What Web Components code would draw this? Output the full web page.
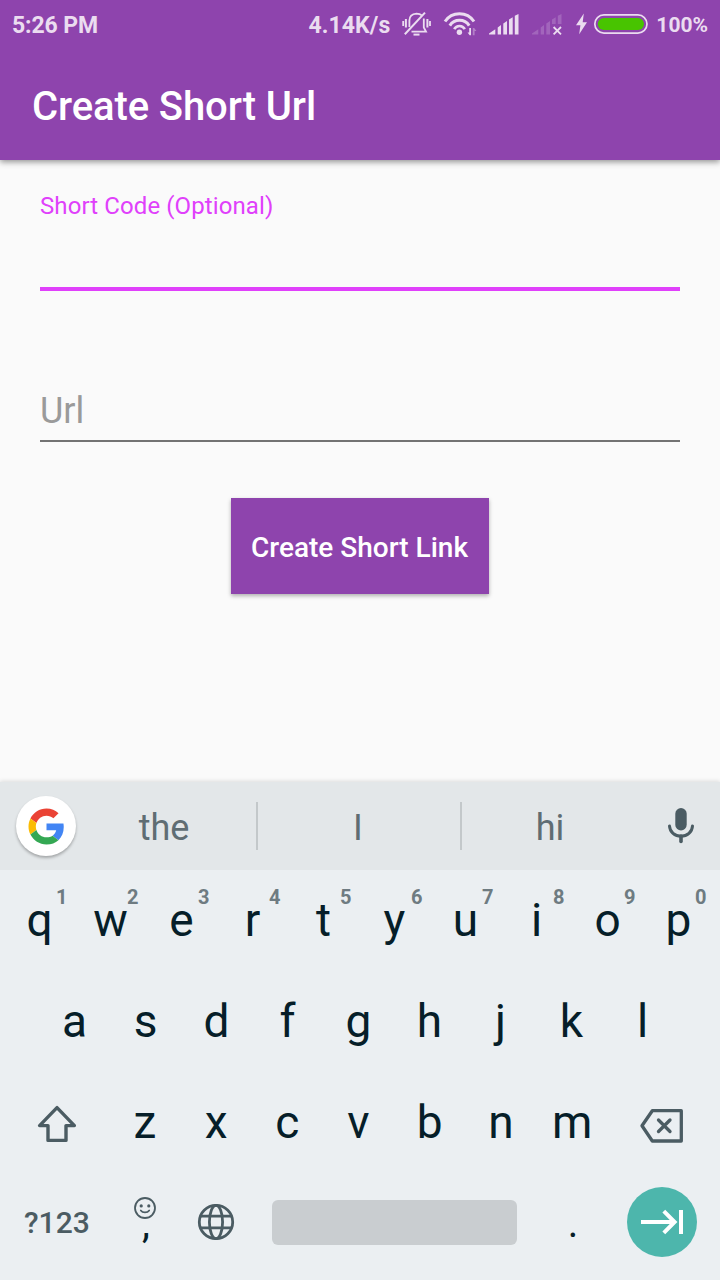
<!DOCTYPE html>
<html lang="en">
<head>
<meta charset="utf-8">
<title>Create Short Url</title>
<style>
  html, body { margin: 0; padding: 0; }
  body { font-family: Roboto, "Noto Sans", sans-serif; background: #fafafa; width: 720px; height: 1280px; overflow: hidden; }
</style>
</head>
<body>
<short-url-app></short-url-app>
<script>
const define = (name, html, setup) => {
  const tpl = document.createElement('template');
  tpl.innerHTML = html;
  customElements.define(name, class extends HTMLElement {
    constructor() {
      super();
      this.attachShadow({ mode: 'open' }).append(tpl.content.cloneNode(true));
    }
    connectedCallback() { if (setup) setup(this, this.shadowRoot); }
  });
};

/* Icons: [viewBox, markup]; the viewBox size is also the drawn size. */
const bars = `<path d="M0 20.5V19.5L6.3 15.2V20.5ZM8.7 20.5V13.4L12 11.1V20.5ZM14.3 20.5V9.5L18 7V20.5ZM20 20.5V5.6L23.7 3.2V20.5ZM25.8 20.5V1.8L29.5 0V20.5Z"/>`;
const ICONS = {
  silent: ['402 11 30 26', `<g fill="none" stroke="currentColor" stroke-width="1.8"><path d="M409.4 27V20.5C409.4 16.5 411.5 14 416.5 13.6C419 13.6 420.5 14.2 421.8 15.4M423.8 18.5V27.5L426 31.6H411.5"/><path d="M404.8 34.2L425 12.6" stroke-width="2"/><path d="M413.5 34.6H419.5" stroke-width="2"/><path d="M403.2 21V26M430 21V26"/><path d="M405.9 19V27.5M427.4 19V27.5" stroke-width="2"/></g>`],
  wifi: ['443 12 34 25', `<g fill="none" stroke="currentColor" stroke-width="3"><path d="M445 21.5A17.5 17.5 0 0 1 474 21.5"/><path d="M449.8 25.6A11.6 11.6 0 0 1 469.2 25.6"/><path d="M454.2 29.2A6 6 0 0 1 464.8 29.2" stroke-width="2.6"/></g><circle cx="459.4" cy="32.2" r="2.7"/><path d="M469.2 28h1.8v7.3h-1.4L467.6 32.4h1.6z"/><path opacity=".4" d="M472.8 28h1.4l2.2 3h-1.8v4.3h-1.8z"/>`],
  signal: ['0 0 30 21', bars],
  nosignal: ['0 0 30 21', `<g opacity=".22"><path d="M0 20.5V19.5L6.3 15.2V20.5ZM8.7 20.5V13.4L12 11.1V20.5ZM14.3 20.5V9.5L18 7V20.5ZM20 10V5.6L23.7 3.2V10ZM25.8 10V1.8L29.5 0V10Z"/></g><path d="M21.6 13L29 20.4M29 13L21.6 20.4" fill="none" stroke="currentColor" stroke-width="1.8"/>`],
  bolt: ['575 13 13 22', `<path d="M583.8 13.4L576 25.3H580.4L579.2 34.2L587 22.2H582.7Z"/>`],
  battery: ['594 14 54 20', `<rect x="594.8" y="14.9" width="52.2" height="18.2" rx="9.1" fill="none" stroke="currentColor" stroke-width="1.7"/><rect x="597.8" y="18" width="46.2" height="12" rx="6" fill="#48c400"/>`],
  google: ['2 2 44 44', `<path fill="#EA4335" d="M24 9.5c3.54 0 6.71 1.22 9.21 3.6l6.85-6.85C35.9 2.38 30.47 0 24 0 14.62 0 6.51 5.38 2.56 13.22l7.98 6.19C12.43 13.72 17.74 9.5 24 9.5z"/><path fill="#4285F4" d="M46.98 24.55c0-1.57-.15-3.09-.38-4.55H24v9.02h12.94c-.58 2.96-2.26 5.48-4.78 7.18l7.73 6c4.51-4.18 7.09-10.36 7.09-17.65z"/><path fill="#FBBC05" d="M10.53 28.59c-.48-1.45-.76-2.99-.76-4.59s.27-3.14.76-4.59l-7.98-6.19C.92 16.46 0 20.12 0 24c0 3.88.92 7.54 2.56 10.78l7.97-6.19z"/><path fill="#34A853" d="M24 48c6.48 0 11.93-2.13 15.89-5.81l-7.73-6c-2.15 1.45-4.92 2.3-8.16 2.3-6.26 0-11.57-4.22-13.47-9.91l-7.98 6.19C6.51 42.62 14.62 48 24 48z"/>`],
  mic: ['667 807 28 37', `<rect x="675.3" y="808" width="11.4" height="22.4" rx="5.7"/><path d="M669.5 826C669.8 832 674.8 836.2 681 836.2S692.2 832 692.5 826" fill="none" stroke="currentColor" stroke-width="3" stroke-linecap="round"/><path d="M681 836V841.5" stroke="currentColor" stroke-width="3.6" stroke-linecap="round"/>`],
  shift: ['37 1104 40 40', `<path d="M57 1107.6L39.6 1125.6H48V1140.4H66V1125.6H74.4Z" fill="none" stroke="currentColor" stroke-width="3.4" stroke-linejoin="round"/>`],
  backspace: ['640 1107 44 37', `<g fill="none" stroke="currentColor" stroke-width="3.3" stroke-linejoin="round" stroke-linecap="round"><path d="M642 1125.8L652.3 1110.7H681.3V1141H652.3Z"/><path d="M658.5 1120L670 1131.5M670 1120L658.5 1131.5"/></g>`],
  smile: ['0 0 22 22', `<g fill="none" stroke="currentColor"><circle cx="11" cy="11" r="10" stroke-width="1.8"/><path d="M6.8 13.4C8.6 16 13.4 16 15.2 13.4" stroke-width="1.7" stroke-linecap="round"/></g><circle cx="7.2" cy="8.9" r="1.6"/><circle cx="14.8" cy="8.9" r="1.6"/>`],
  globe: ['0 0 38 38', `<g fill="none" stroke="currentColor" stroke-width="2.8"><circle cx="19" cy="19" r="16.7"/><ellipse cx="19" cy="19" rx="6.6" ry="16.7"/><path d="M3 13.2H35M3 24.8H35"/></g>`],
  next: ['627 1187 70 70', `<g fill="none" stroke="currentColor" stroke-width="4"><path d="M641 1222H674"/><path d="M663.8 1211.2L674.6 1222L663.8 1232.8"/><path d="M681 1210V1234"/></g>`]
};
define('ui-icon', `<style>:host{display:inline-flex;flex:none}svg{display:block;fill:currentColor;overflow:visible}</style>`, (el, root) => {
  const [box, body] = ICONS[el.getAttribute('name')];
  const [, , w, h] = box.split(' ');
  const s = el.getAttribute('size');
  root.innerHTML += `<svg viewBox="${box}" width="${s || w}" height="${s || h}">${body}</svg>`;
});

define('status-bar', `<style>
  :host{display:flex;height:50px;align-items:center;color:#ebdcf0;font-size:23px;font-weight:700;line-height:48px;padding:0 12px 0 12px}
  .time{flex:1}
  ui-icon{margin-left:12px}
  span{white-space:nowrap;padding-top:2px;letter-spacing:-.1px}
  .level{margin-left:8px;padding:0;font-size:21px;letter-spacing:0}
</style>
<span class="time">5:26 PM</span><span style="letter-spacing:.1px">4.14K/s</span>
<ui-icon name="silent" style="margin-left:12px;margin-bottom:2px"></ui-icon>
<ui-icon name="wifi" style="margin-left:11px;margin-bottom:1px"></ui-icon>
<ui-icon name="signal" style="margin-bottom:1px"></ui-icon>
<ui-icon name="nosignal" style="margin-left:13px;margin-bottom:1px"></ui-icon>
<ui-icon name="bolt" style="margin-left:13px;margin-bottom:2px"></ui-icon>
<ui-icon name="battery" style="margin-left:6px;margin-bottom:2px"></ui-icon>
<span class="level">100%</span>`);

define('app-bar', `<style>
  :host{display:block;height:160px;background:#8e44ad;color:#fff;box-shadow:0 2px 6px rgba(0,0,0,.42);position:relative}
  h1{margin:0;padding-left:32px;font-size:40px;font-weight:500;line-height:114px;letter-spacing:-.1px}
</style><status-bar></status-bar><h1><slot></slot></h1>`);

define('text-field', `<style>
  :host{display:flex;flex-direction:column;justify-content:flex-end;box-sizing:border-box;height:112px;border-bottom:2px solid #737373;color:#9a9a9a;font-size:36px}
  .label{line-height:58px}
  :host([focused]){border-bottom:4px solid #e040fb;color:#e040fb;font-size:24px;letter-spacing:.1px;justify-content:flex-start}
  :host([focused]) .label{line-height:32px}
</style><div class="label"><slot></slot></div>`);

define('raised-button', `<style>
  :host{display:block}
  button{display:block;border:0;padding:0;width:258px;height:96px;background:#8e44ad;color:#fff;font:500 28px/96px Roboto,sans-serif;box-shadow:0 2px 4px rgba(0,0,0,.3)}
  span{display:block;padding:2px 1px 0 0}
</style><button><span><slot></slot></span></button>`);

define('suggestion-strip', `<style>
  :host{display:grid;grid-template-columns:72px 184px 2px 202px 2px 176px 1fr;grid-template-rows:88px;height:88px;align-items:center;background:#e3e7e9;color:#5f6d73;font-size:36px;line-height:80px;text-align:center;box-shadow:0 -1px 4px rgba(0,0,0,.12)}
  .g{width:60px;height:60px;margin-left:16px;border-radius:50%;background:#fff;display:flex;align-items:center;justify-content:center;box-shadow:0 2px 3px rgba(0,0,0,.28)}
  span{padding-top:4px}
  i{height:48px;background:#c3c8ca}
  .mic{display:flex;justify-content:center;padding:0 0 1px 4px;color:#4b5c63}
</style>
<div class="g"><ui-icon name="google" size="33"></ui-icon></div>
<span>the</span><i></i><span style="padding-right:2px">I</span><i></i><span>hi</span>
<div class="mic"><ui-icon name="mic"></ui-icon></div>`);

define('key-cap', `<style>
  :host{display:flex;position:relative;flex:2 0 0;height:101px;align-items:center;justify-content:center;font-size:46px;line-height:101px;color:#061e29}
  slot{display:block;margin-right:3px}
  :host([wide]){flex-grow:3;color:#4b5c63;font-size:30px;font-weight:500}
  :host([wide]) slot{margin-right:1px}
  :host([tone]){color:#4b5c63}
  :host([icon]) slot{display:flex}
  :host([mark]){font-size:40px}
  :host([mark]) slot{padding-top:2px;margin-right:1px}
  .hint{position:absolute;left:50%;top:16px;margin-left:15px;font-size:20px;font-weight:700;line-height:22px;color:#6e7b81}
</style><slot></slot>`, (el, root) => {
  const hint = el.getAttribute('hint');
  if (hint) { const s = document.createElement('span'); s.className = 'hint'; s.textContent = hint; root.append(s); }
});

define('key-row', `<style>:host{display:flex;height:101px;padding:0 4px}:host([top]){padding:0 4.5px 0 5.5px}:host([inset]){padding:0 40.5px}</style><slot></slot>`);

define('soft-keyboard', `<style>
  :host{display:block;height:498px;background:#ebeff2}
  suggestion-strip{position:relative}
  .keys{position:relative;background:#ebeff2;height:410px}
  .last{margin-top:-1px}
  .space{flex:8 0 0;display:flex;align-items:center}
  .space div{flex:1;height:45px;margin:0 21px 0 19px;border-radius:6px;background:#c9cdd0}
  .enter{width:70px;height:70px;margin-bottom:1px;border-radius:50%;background:#4db6ac;color:#fff}
  .globe{margin-bottom:1px}
  .shift{margin-top:3px}
  .back{margin:6px 1px 0 0}
  .smile{position:absolute;left:23px;top:25px;color:#4b5c63}
</style>
<suggestion-strip></suggestion-strip>
<div class="keys">
<key-row top>${[...'qwertyuiop'].map((c, i) => `<key-cap hint="${(i + 1) % 10}">${c}</key-cap>`).join('')}</key-row>
<key-row inset>${[...'asdfghjkl'].map(c => `<key-cap>${c}</key-cap>`).join('')}</key-row>
<key-row><key-cap wide icon><ui-icon class="shift" name="shift"></ui-icon></key-cap>${[...'zxcvbnm'].map(c => `<key-cap>${c}</key-cap>`).join('')}<key-cap wide icon><ui-icon class="back" name="backspace"></ui-icon></key-cap></key-row>
<key-row class="last"><key-cap wide>?123</key-cap><key-cap mark><ui-icon class="smile" name="smile"></ui-icon>,</key-cap><key-cap tone icon><ui-icon class="globe" name="globe"></ui-icon></key-cap><div class="space"><div></div></div><key-cap mark>.</key-cap><key-cap wide icon><ui-icon class="enter" name="next"></ui-icon></key-cap></key-row>
</div>`);

define('short-url-app', `<style>
  :host{display:flex;flex-direction:column;width:720px;height:1280px;background:#fafafa}
  main{flex:1;display:flex;flex-direction:column;padding:30px 40px 0}
  .url{margin-top:39px}
  raised-button{align-self:center;margin-top:56px}
</style>
<app-bar>Create Short Url</app-bar>
<main>
  <text-field focused style="height:101px">Short Code (Optional)</text-field>
  <text-field class="url">Url</text-field>
  <raised-button>Create Short Link</raised-button>
</main>
<soft-keyboard></soft-keyboard>`);
</script>
</body>
</html>
